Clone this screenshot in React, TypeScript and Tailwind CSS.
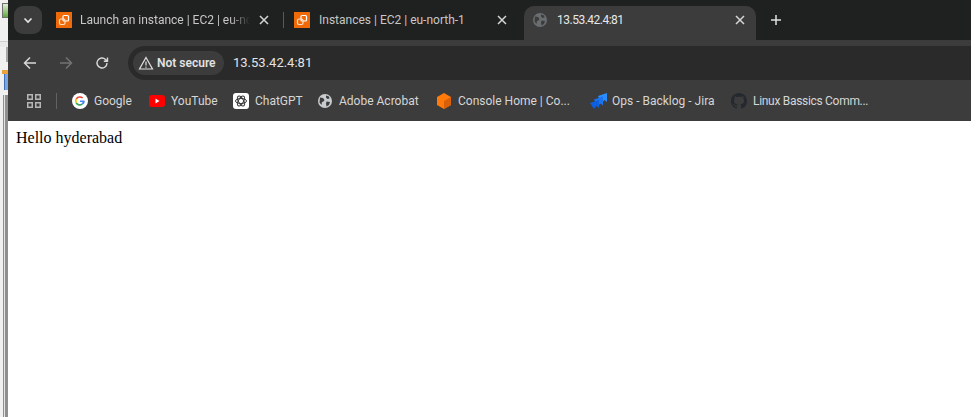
import React from "react";

const ui = { fontFamily: 'Roboto, "Open Sans", sans-serif' };

function Close() {
  return (
    <svg width="10" height="10" viewBox="0 0 10 10" className="shrink-0">
      <path d="M1 1l8 8M9 1l-8 8" stroke="#d6d6d6" strokeWidth="1.5" />
    </svg>
  );
}

function Ec2() {
  return (
    <svg width="16" height="16" viewBox="0 0 16 16" className="shrink-0">
      <rect width="16" height="16" fill="#f06a0a" />
      <rect x="7" y="3.500" width="5.500" height="5.500" rx="1" fill="none" stroke="#fff" strokeWidth="1.2" />
      <rect x="3.500" y="7" width="5.500" height="5.500" rx="1.500" fill="none" stroke="#fde2c8" strokeWidth="1.2" />
    </svg>
  );
}

function Globe({ size = 14, color = "#c9cccf", hole = "#3c3c3c" }: { size?: number; color?: string; hole?: string }) {
  return (
    <svg width={size} height={size} viewBox="0 0 14 14" className="shrink-0">
      <circle cx="7" cy="7" r="7" fill={color} />
      <path d="M2 3.500l3 .5 1.500 2-1 1.500-1.500.5-.5 3L1.500 8.500zM8 1.500l3 1 .5 2-2 .5-1.500-1.500zM8.500 7.500l3.500.5-1 3-2.500 1.500-.5-3z" fill={hole} />
    </svg>
  );
}

function Bookmark({ icon, label, w, tight }: { icon: React.ReactNode; label: string; w: string; tight?: boolean }) {
  return (
    <div className={`flex items-center ${w} shrink-0`}>
      {icon}
      <span className={tight ? "text-[12px] tracking-[-0.3px] text-[#d6d6d6] whitespace-nowrap" : "text-[12px] text-[#d6d6d6] whitespace-nowrap"}>{label}</span>
    </div>
  );
}

export default function App() {
  return (
    <div className="flex h-[417px] w-[971px] overflow-hidden bg-white" style={ui}>
      <div className="flex w-[8px] shrink-0 flex-col bg-[#f0f0f0]">
        <div className="h-[3px]" />
        <div className="ml-[2px] h-[15px] w-[6px] border border-r-0 border-[#6f6f6f] bg-[linear-gradient(#e4eed8,#5fa83c)]" />
        <div className="h-[23px]" />
        <div className="h-px bg-[#cfcfcf]" />
        <div className="h-[5px] bg-[#e9e9e9]" />
        <div className="ml-[6px] h-[15px] w-[2px] bg-[#a8a8a8]" />
        <div className="h-[8px] bg-[#f0f0f0]" />
        <div className="ml-[2px] h-[4px] bg-[#e8a33d]" />
        <div className="ml-[4px] h-[16px] border-l border-[#3f6fb5] bg-[#7fa6dc]" />
        <div className="h-[5px]" />
        <div className="ml-[3px] flex-1 border-l-[1px] border-r-[3px] border-[#8f8f8f] bg-[#e4e4e4]" />
      </div>

      <div className="flex min-w-0 flex-1 flex-col">
        {/* tab strip */}
        <div className="flex h-[40px] shrink-0 items-end bg-[#1f2020] text-[12px]">
          <div className="mb-[6px] ml-[6px] flex h-[28px] w-[28px] shrink-0 items-center justify-center rounded-[9px] bg-[#3c3c3c]">
            <svg width="10" height="7" viewBox="0 0 10 7">
              <path d="M1.500 1.500L5 5l3.500-3.500" fill="none" stroke="#e8e8e8" strokeWidth="1.6" />
            </svg>
          </div>
          <div className="ml-[14px] flex h-[34px] w-[227px] shrink-0 items-center pb-[6px]">
            <Ec2 />
            <span className="ml-[8px] w-[170px] overflow-hidden whitespace-nowrap text-[#c7c7c7] [mask-image:linear-gradient(to_right,black_88%,transparent)]">
              Launch an instance | EC2 | eu-north-1
            </span>
            <span className="ml-[9px]"><Close /></span>
          </div>
          <div className="mb-[12px] h-[16px] w-px shrink-0 bg-[#5a5a5a]" />
          <div className="ml-[10px] flex h-[34px] w-[230px] shrink-0 items-center pb-[6px]">
            <Ec2 />
            <span className="ml-[9px] w-[169px] whitespace-nowrap text-[#c7c7c7]">Instances | EC2 | eu-north-1</span>
            <span className="ml-[9px]"><Close /></span>
          </div>
          <div className="flex h-[34px] w-[232px] shrink-0 items-center rounded-t-[10px] bg-[#3c3c3c] pl-[9px] pb-[6px]">
            <Globe color="#6a6d70" hole="#3c3c3c" />
            <span className="ml-[10px] w-[178px] whitespace-nowrap tracking-[-0.5px] text-[#e8e8e8]">13.53.42.4:81</span>
            <Close />
          </div>
          <svg width="12" height="12" viewBox="0 0 12 12" className="mb-[14px] ml-[14px] shrink-0">
            <path d="M6 1v10M1 6h10" stroke="#e0e0e0" strokeWidth="1.5" />
          </svg>
        </div>

        {/* toolbar */}
        <div className="flex h-[40px] shrink-0 bg-[#3c3c3c] pt-[6px]">
          <div className="-mt-[6px] flex h-[40px] w-[120px] shrink-0 items-center rounded-tl-[10px] bg-[#3c3c3c] pt-[6px]">
            <svg width="14" height="14" viewBox="0 0 14 14" className="ml-[15px] shrink-0">
              <path d="M13 7H2M7 1.500L1.500 7 7 12.500" fill="none" stroke="#d8d8d8" strokeWidth="1.5" />
            </svg>
            <svg width="14" height="14" viewBox="0 0 14 14" className="ml-[22px] shrink-0">
              <path d="M1 7h11M7 1.500L12.500 7 7 12.500" fill="none" stroke="#737373" strokeWidth="1.5" />
            </svg>
            <svg width="14" height="14" viewBox="0 0 14 14" className="ml-[22px] shrink-0">
              <path d="M12 7a5 5 0 1 1-1.500-3.600L12.500 5.200M12.500 1.500v3.800H8.800" fill="none" stroke="#d8d8d8" strokeWidth="1.4" />
            </svg>
          </div>
          <div className="flex h-[34px] flex-1 items-center rounded-l-[17px] bg-[#2a2a2a] pl-[5px]">
            <div className="flex h-[24px] w-[91px] shrink-0 items-center rounded-full bg-[#3c3c3c] pl-[5px]">
              <svg width="16" height="14" viewBox="0 0 16 14" className="shrink-0">
                <path d="M8 1.500L14.500 13h-13z" fill="none" stroke="#e0e0e0" strokeWidth="1.2" />
                <path d="M8 5.500v4M8 10.500v1.200" stroke="#e0e0e0" strokeWidth="1.2" />
              </svg>
              <span className="ml-[3px] whitespace-nowrap text-[12px] font-semibold text-[#e2e2e2]">Not secure</span>
            </div>
            <span className="ml-[9px] whitespace-nowrap text-[13px] text-[#e4e4e4]">13.53.42.4:81</span>
          </div>
        </div>

        {/* bookmarks */}
        <div className="flex h-[41px] shrink-0 items-center bg-[#3c3c3c]">
          <svg width="14" height="14" viewBox="0 0 14 14" className="ml-[19px] shrink-0">
            <path d="M0.750 0.750h4.500v4.500h-4.500zM8.750 0.750h4.500v4.500h-4.500zM0.750 8.750h4.500v4.500h-4.500zM8.750 8.750h4.500v4.500h-4.500z" fill="none" stroke="#b5b5b5" strokeWidth="1.5" />
          </svg>
          <div className="ml-[15px] mr-[15px] h-[16px] w-px shrink-0 bg-[#626262]" />
          <Bookmark
            w="w-[77px]"
            label="Google"
            icon={
              <svg width="16" height="16" viewBox="0 0 16 16" className="mr-[6px] shrink-0">
                <circle cx="8" cy="8" r="8" fill="#fff" />
                <path d="M8 3.200a4.800 4.800 0 0 1 3.200 1.200l-1.200 1.200A3.100 3.100 0 0 0 5 6.600L3.600 5.600A4.800 4.800 0 0 1 8 3.200z" fill="#ea4335" />
                <path d="M3.600 5.600L5 6.600a3.100 3.100 0 0 0 0 2.800l-1.400 1a4.800 4.800 0 0 1 0-4.800z" fill="#fbbc05" />
                <path d="M3.600 10.400l1.400-1a3.100 3.100 0 0 0 4.600 1l1.300 1.100A4.800 4.800 0 0 1 3.600 10.400z" fill="#34a853" />
                <path d="M12.700 8.700c0 1.200-.6 2.200-1.800 2.800L9.600 10.400c.5-.3.900-.8 1-1.400H8V7.400h4.600z" fill="#4285f4" />
              </svg>
            }
          />
          <Bookmark
            w="w-[84px]"
            label="YouTube"
            icon={
              <svg width="16" height="12" viewBox="0 0 16 12" className="mr-[6px] shrink-0">
                <rect width="16" height="12" rx="3" fill="#f00" />
                <path d="M6.500 3.500L10.500 6l-4 2.500z" fill="#fff" />
              </svg>
            }
          />
          <Bookmark
            w="w-[85px]"
            label="ChatGPT"
            icon={
              <svg width="16" height="16" viewBox="0 0 16 16" className="mr-[6px] shrink-0">
                <rect width="16" height="16" rx="3" fill="#fff" />
                <g fill="none" stroke="#3a3a3a" strokeWidth="1">
                  <ellipse cx="8" cy="8" rx="5.500" ry="2.500" />
                  <ellipse cx="8" cy="8" rx="5.500" ry="2.500" transform="rotate(60 8 8)" />
                  <ellipse cx="8" cy="8" rx="5.500" ry="2.500" transform="rotate(120 8 8)" />
                </g>
              </svg>
            }
          />
          <Bookmark
            w="w-[119px]"
            label="Adobe Acrobat"
            icon={<span className="mr-[7px]"><Globe /></span>}
          />
          <Bookmark
            w="w-[153px]"
            label="Console Home | Co..."
            icon={
              <svg width="14" height="16" viewBox="0 0 14 16" className="mr-[7px] shrink-0">
                <path d="M7 0l7 4v8l-7 4-7-4V4z" fill="#ff7a0a" />
                <path d="M7 8l7-4v8l-7 4z" fill="#d9600a" />
              </svg>
            }
          />
          <Bookmark
            w="w-[141px]"
            label="Ops - Backlog - Jira"
            icon={
              <svg width="17" height="17" viewBox="0 0 17 17" className="mr-[5px] shrink-0">
                <path d="M8 4L17 1v9l-2.500-2L11.500 11z" fill="#2a8cff" />
                <path d="M4 7.500L13 4.500v9l-2.500-2-3 3z" fill="#1a74f0" />
                <path d="M0 11l9-3v8l-2.500-2L4 17z" fill="#0b5fe0" />
              </svg>
            }
          />
          <Bookmark
            w="w-[140px]"
            tight
            label="Linux Bassics Comm..."
            icon={
              <svg width="16" height="16" viewBox="0 0 16 16" className="mr-[6px] shrink-0">
                <path fill="#24292f" d="M8 0C3.580 0 0 3.580 0 8c0 3.540 2.290 6.530 5.470 7.590.4.070.55-.170.55-.380 0-.190-.010-.820-.010-1.490-2.010.370-2.530-.490-2.690-.940-.090-.230-.480-.940-.820-1.130-.280-.150-.680-.520-.010-.530.630-.010 1.080.580 1.230.820.720 1.210 1.870.870 2.330.660.070-.520.280-.870.510-1.070-1.780-.200-3.640-.890-3.640-3.950 0-.870.310-1.590.820-2.150-.080-.200-.360-1.020.080-2.120 0 0 .670-.210 2.200.820.640-.180 1.320-.270 2-.270s1.360.090 2 .270c1.530-1.040 2.200-.820 2.200-.820.440 1.100.160 1.920.080 2.120.510.560.820 1.270.820 2.150 0 3.070-1.870 3.750-3.650 3.950.290.250.540.730.540 1.480 0 1.070-.010 1.930-.010 2.200 0 .210.150.460.550.380A8.010 8.010 0 0 0 16 8c0-4.420-3.580-8-8-8z" />
              </svg>
            }
          />
        </div>

        {/* page */}
        <div className="flex-1 bg-white pl-[8px] pt-[5px] text-[16px] text-black" style={{ fontFamily: '"Liberation Serif", serif' }}>
          Hello hyderabad
        </div>
      </div>
    </div>
  );
}
